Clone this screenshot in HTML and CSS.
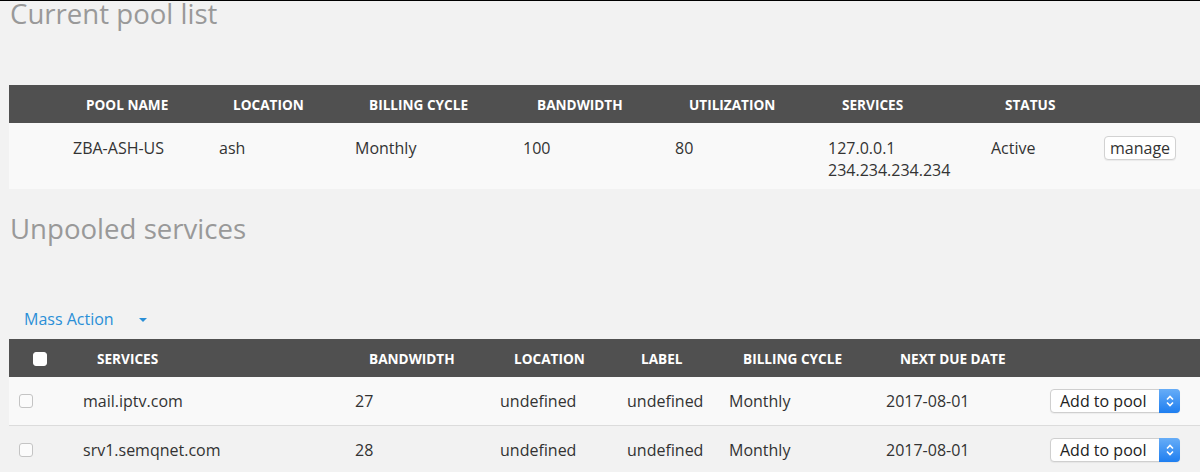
FILE: index.html
```html
<!DOCTYPE html>
<html lang="en">
<head>
    <meta charset="UTF-8">
    <title>Pools</title>
    <link rel="stylesheet" href="styles.css">
</head>
<body>
    <div class="container">
        <h2 class="section-title first">Current pool list</h2>

        <table class="pool-table">
            <colgroup>
                <col style="width:210px"><col style="width:136px"><col style="width:168px"><col style="width:152px">
                <col style="width:153px"><col style="width:163px"><col style="width:113px"><col>
            </colgroup>
            <thead>
                <tr>
                    <th>Pool name</th>
                    <th>Location</th>
                    <th>Billing cycle</th>
                    <th>Bandwidth</th>
                    <th>Utilization</th>
                    <th>Services</th>
                    <th>Status</th>
                    <th></th>
                </tr>
            </thead>
            <tbody>
                <tr>
                    <td>ZBA-ASH-US</td>
                    <td>ash</td>
                    <td>Monthly</td>
                    <td>100</td>
                    <td>80</td>
                    <td>127.0.0.1<br>234.234.234.234</td>
                    <td>Active</td>
                    <td><button class="manage-button">manage</button></td>
                </tr>
            </tbody>
        </table>

        <h2 class="section-title second">Unpooled services</h2>

        <div class="mass-action">
            <a href="#">Mass Action</a>
            <span class="caret"></span>
        </div>

        <table class="service-table">
            <colgroup>
                <col style="width:74px"><col style="width:272px"><col style="width:145px"><col style="width:127px">
                <col style="width:102px"><col style="width:157px"><col style="width:164px"><col>
            </colgroup>
            <thead>
                <tr>
                    <th><span class="check check-head"></span></th>
                    <th>Services</th>
                    <th>Bandwidth</th>
                    <th>Location</th>
                    <th>Label</th>
                    <th>Billing cycle</th>
                    <th>Next due date</th>
                    <th></th>
                </tr>
            </thead>
            <tbody>
                <tr class="odd">
                    <td><span class="check"></span></td>
                    <td>mail.iptv.com</td>
                    <td>27</td>
                    <td>undefined</td>
                    <td>undefined</td>
                    <td>Monthly</td>
                    <td>2017-08-01</td>
                    <td>
                        <div class="pool-select">
                            <span class="pool-select-text">Add to pool</span>
                            <span class="pool-select-arrows">
                                <svg width="10" height="14" viewBox="0 0 10 14"><path d="M2 5.5 L5 2.5 L8 5.5 M2 8.5 L5 11.5 L8 8.5" fill="none" stroke="#fff" stroke-width="1.6"/></svg>
                            </span>
                        </div>
                    </td>
                </tr>
                <tr>
                    <td><span class="check"></span></td>
                    <td>srv1.semqnet.com</td>
                    <td>28</td>
                    <td>undefined</td>
                    <td>undefined</td>
                    <td>Monthly</td>
                    <td>2017-08-01</td>
                    <td>
                        <div class="pool-select">
                            <span class="pool-select-text">Add to pool</span>
                            <span class="pool-select-arrows">
                                <svg width="10" height="14" viewBox="0 0 10 14"><path d="M2 5.5 L5 2.5 L8 5.5 M2 8.5 L5 11.5 L8 8.5" fill="none" stroke="#fff" stroke-width="1.6"/></svg>
                            </span>
                        </div>
                    </td>
                </tr>
            </tbody>
        </table>
    </div>
</body>
</html>
```

FILE: styles.css
```css
body {
    margin: 0;
    padding: 0;
    border-top: 1px solid #000;
    background-color: #f2f2f2;
    font-family: "Open Sans", "Liberation Sans", sans-serif;
    color: #333;
    overflow: hidden;
}

.container {
    padding-left: 9px;
}

.section-title {
    margin: 0;
    font-size: 27.6px;
    font-weight: 400;
    line-height: 22px;
    color: #999;
    padding-left: 1px;
}

.section-title.first {
    margin-top: 1px;
    margin-bottom: 61px;
}

.section-title.second {
    margin-top: 28px;
    margin-bottom: 70px;
}

table {
    border-collapse: collapse;
    table-layout: fixed;
    width: 100%;
}

th {
    background-color: #505050;
    color: #fff;
    font-size: 13.6px;
    font-weight: 700;
    text-transform: uppercase;
    text-align: left;
    height: 38px;
    padding: 0 0 0 14px;
    white-space: nowrap;
}

td {
    font-size: 16px;
    line-height: 22px;
    padding: 0;
    white-space: nowrap;
}

.pool-table tbody tr {
    background-color: #f9f9f9;
}

.pool-table td {
    vertical-align: top;
    padding: 14px 0 8px;
}

.pool-table th:first-child {
    padding-left: 77px;
}

.pool-table td:first-child {
    padding-left: 64px;
}

.manage-button {
    font-family: inherit;
    font-size: 16px;
    color: #333;
    background-color: #fff;
    border: 1px solid #d2d2d2;
    border-radius: 4px;
    padding: 0 5px;
    height: 24px;
    line-height: 20px;
    margin-top: -1px;
    box-shadow: 0 1px 1px rgba(0,0,0,0.06);
}

.mass-action {
    display: flex;
    align-items: center;
    padding-left: 15px;
    height: 20px;
    margin-bottom: 10px;
}

.mass-action a {
    font-size: 16px;
    color: #2a8fd7;
    text-decoration: none;
    line-height: 20px;
}

.caret {
    width: 0;
    height: 0;
    margin-left: 25px;
    margin-top: 2px;
    border-left: 4.5px solid transparent;
    border-right: 4.5px solid transparent;
    border-top: 4px solid #2a8fd7;
}

.service-table th:first-child {
    padding-left: 24px;
}

.service-table td {
    vertical-align: middle;
    padding: 12px 0;
}

.service-table td:first-child {
    padding-left: 10px;
}

.service-table tr.odd {
    background-color: #f9f9f9;
    border-bottom: 1px solid #dcdcdc;
}

.check {
    display: block;
    width: 12px;
    height: 12px;
    border: 1px solid #c4c4c4;
    border-radius: 3px;
    background-color: #fbfbfb;
}

.check-head {
    background-color: #fff;
    border-color: #fff;
    margin-top: 2px;
}

.pool-select {
    display: flex;
    width: 130px;
    height: 24px;
    box-sizing: border-box;
    border: 1px solid #cfcfcf;
    border-radius: 4px;
    background-color: #fff;
    box-shadow: 0 1px 1px rgba(0,0,0,0.05);
}

.pool-select-text {
    flex: 1;
    font-size: 16px;
    line-height: 22px;
    padding-left: 9px;
    color: #222;
}

.pool-select-arrows {
    width: 21px;
    margin: -1px -1px -1px 0;
    border-radius: 0 4px 4px 0;
    background: linear-gradient(#67adf7, #1e7ef0);
    display: flex;
    align-items: center;
    justify-content: center;
}
```
